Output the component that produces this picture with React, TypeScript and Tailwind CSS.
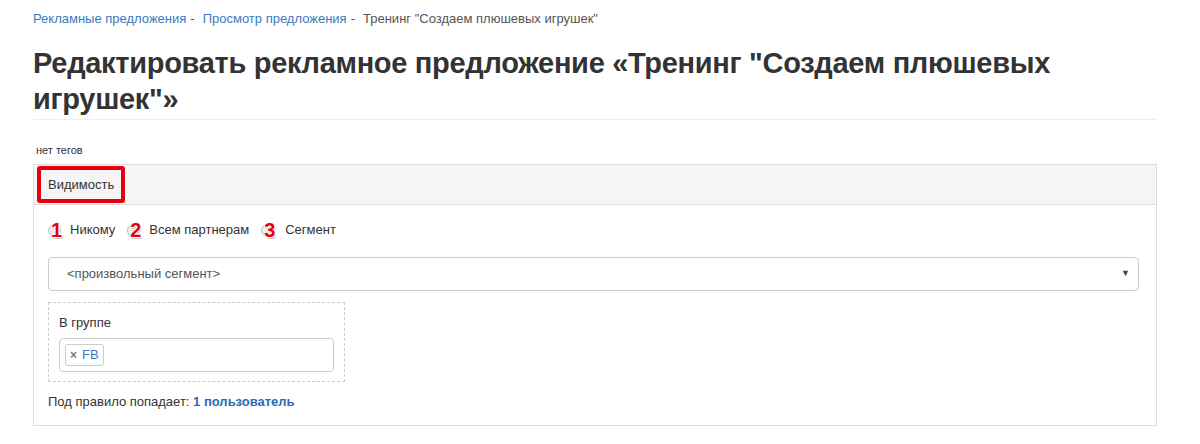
const RadioMark = ({ n }: { n: string }) => {
  return (
    <span className="relative inline-flex items-center justify-center w-[17px] h-[18px] mr-[5px]">
      <span className="absolute left-0 top-[3px] w-[13px] h-[13px] rounded-full border border-[#bbb] bg-[#eee]" />
      <span
        className="relative text-[20px] font-bold leading-none text-[#e3000f]"
        style={{ textShadow: '1px 0 #fff, -1px 0 #fff, 0 1px #fff, 0 -1px #fff, 1px 2px #ccc' }}
      >
        {n}
      </span>
    </span>
  );
};

const App = () => {
  return (
    <div className="w-[1200px] h-[444px] bg-white font-['Liberation_Sans',Arial,sans-serif] text-[#333] overflow-hidden">
      <div className="px-[33px] pt-[10px]">
        {/* breadcrumbs */}
        <div className="text-[13px] leading-[18px] flex gap-[4px]">
          <a href="#" className="text-[#3a7bc0]">Рекламные предложения</a>
          <span className="text-[#555]">-</span>
          <a href="#" className="text-[#3a7bc0] ml-[4px]">Просмотр предложения</a>
          <span className="text-[#555]">-</span>
          <span className="text-[#555] ml-[4px]">Тренинг "Создаем плюшевых игрушек"</span>
        </div>

        <h1 className="mt-[17px] text-[29px] leading-[36px] font-bold tracking-[-0.3px] text-[#333] w-[1124px] pb-[2px] border-b border-[#eee]">
          Редактировать рекламное предложение «Тренинг "Создаем плюшевых игрушек"»
        </h1>

        <div className="mt-[23px] ml-[3px] text-[11px] leading-[14px] text-[#333]">нет тегов</div>

        {/* panel */}
        <div className="mt-[7px] w-[1124px] border border-[#ddd]">
          <div className="h-[40px] bg-[#f5f5f5] border-b border-[#ddd] flex items-center pl-[3px]">
            <div className="h-[37px] border-[4px] border-[#e3000f] rounded-[3px] flex items-center px-[7px] text-[13px]">
              Видимость
            </div>
          </div>

          <div className="px-[14px] pt-[15px] pb-[14px]">
            <div className="flex items-center text-[13px] leading-[18px] h-[20px]">
              <RadioMark n="1" />
              <span className="mr-[12px]">Никому</span>
              <RadioMark n="2" />
              <span className="mr-[12px]">Всем партнерам</span>
              <RadioMark n="3" />
              <span className="ml-[2px]">Сегмент</span>
            </div>

            <div className="mt-[17px] h-[34px] w-[1091px] border border-[#ccc] rounded-[4px] flex items-center justify-between pl-[18px] pr-[8px] text-[13px] text-[#555]">
              <span>&lt;произвольный сегмент&gt;</span>
              <span className="text-[9px] text-[#444]">▼</span>
            </div>

            <div className="mt-[11px] w-[297px] border border-dashed border-[#ccc] px-[10px] pt-[11px] pb-[9px]">
              <div className="text-[13px] leading-[18px]">В группе</div>
              <div className="mt-[6px] h-[34px] border border-[#ccc] rounded-[4px] flex items-center px-[5px]">
                <span className="h-[22px] border border-[#ccc] rounded-[3px] flex items-center px-[4px] text-[13px] text-[#3a7bc0] gap-[5px]">
                  <span className="text-[#777] text-[12px] font-bold">×</span>
                  FB
                </span>
              </div>
            </div>

            <div className="mt-[11px] text-[13px] leading-[18px]">
              Под правило попадает: <a href="#" className="font-bold text-[#2a6cb0]">1 пользователь</a>
            </div>
          </div>
        </div>
      </div>
    </div>
  );
};

export default App;
